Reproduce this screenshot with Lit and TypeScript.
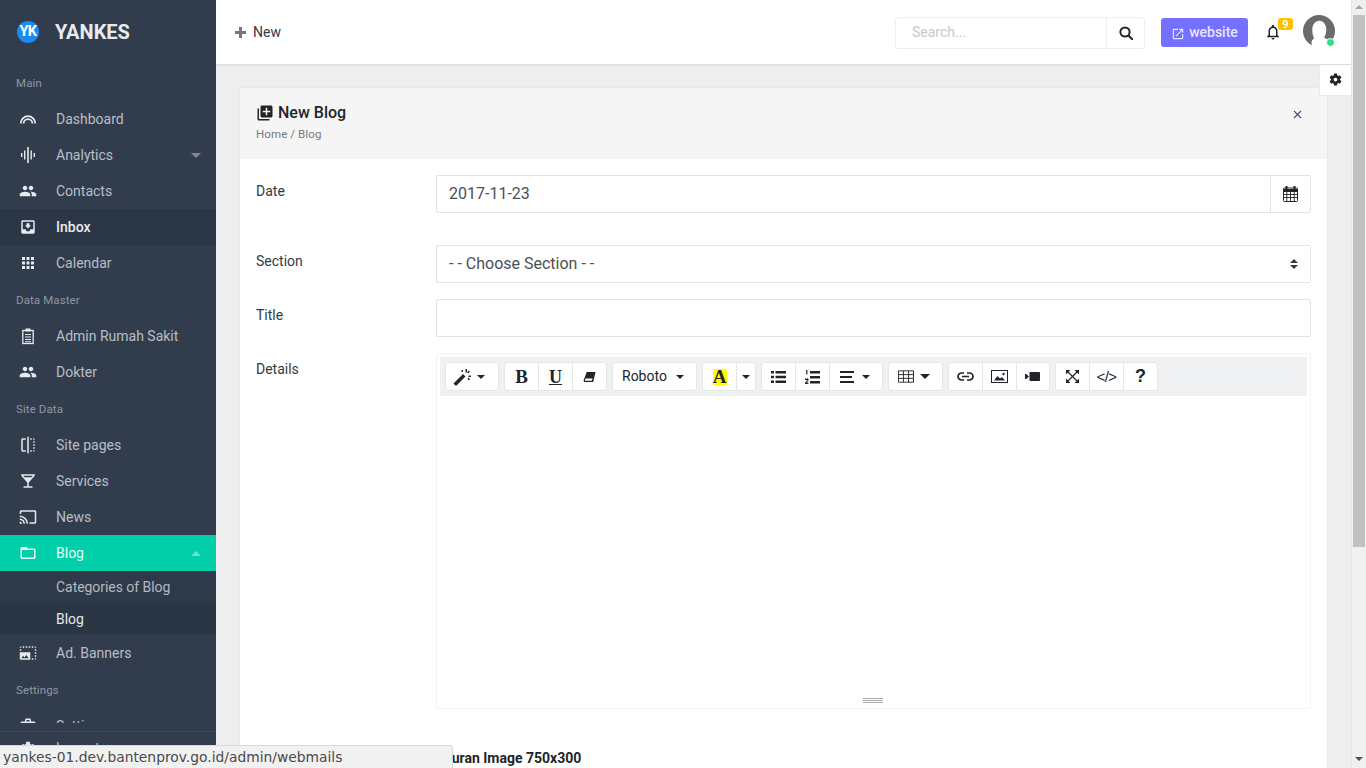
import { LitElement, html, css } from "lit";
import { customElement } from "lit/decorators.js";

const P: Record<string, string> = {
  people: "M16 11c1.66 0 2.99-1.34 2.99-3S17.66 5 16 5c-1.66 0-3 1.34-3 3s1.34 3 3 3zm-8 0c1.66 0 2.99-1.34 2.99-3S9.66 5 8 5C6.34 5 5 6.34 5 8s1.34 3 3 3zm0 2c-2.33 0-7 1.17-7 3.5V19h14v-2.5c0-2.33-4.67-3.5-7-3.5zm8 0c-.29 0-.62.02-.97.05 1.16.84 1.97 1.97 1.97 3.45V19h6v-2.5c0-2.33-4.67-3.5-7-3.5z",
  inbox: "M19 3H4.99c-1.11 0-1.98.89-1.98 2L3 19c0 1.1.88 2 1.99 2H19c1.1 0 2-.9 2-2V5c0-1.11-.9-2-2-2zm0 12h-4c0 1.66-1.35 3-3 3s-3-1.34-3-3H4.99V5H19v10zm-3-5h-2V7h-4v3H8l4 4 4-4z",
  apps: "M4 8h4V4H4v4zm6 12h4v-4h-4v4zm-6 0h4v-4H4v4zm0-6h4v-4H4v4zm6 0h4v-4h-4v4zm6-10v4h4V4h-4zm-6 4h4V4h-4v4zm6 6h4v-4h-4v4zm0 6h4v-4h-4v4z",
  flip: "M15 21h2v-2h-2v2zm4-12h2V7h-2v2zM3 5v14c0 1.1.9 2 2 2h4v-2H5V5h4V3H5c-1.1 0-2 .9-2 2zm16-2v2h2c0-1.1-.9-2-2-2zm-8 20h2V1h-2v22zm8-6h2v-2h-2v2zM15 5h2V3h-2v2zm4 8h2v-2h-2v2zm0 8c1.1 0 2-.9 2-2h-2v2z",
  bar: "M21 5V3H3v2l8 9v5H6v2h12v-2h-5v-5l8-9zM7.43 7L5.66 5h12.69l-1.78 2H7.43z",
  cast: "M21 3H3c-1.1 0-2 .9-2 2v3h2V5h18v14h-7v2h7c1.1 0 2-.9 2-2V5c0-1.1-.9-2-2-2zM1 18v3h3c0-1.66-1.34-3-3-3zm0-4v2c2.76 0 5 2.24 5 5h2c0-3.87-3.13-7-7-7zm0-4v2c4.97 0 9 4.03 9 9h2c0-6.08-4.93-11-11-11z",
  folder: "M20 6h-8l-2-2H4c-1.1 0-1.99.9-1.99 2L2 18c0 1.1.9 2 2 2h16c1.1 0 2-.9 2-2V8c0-1.1-.9-2-2-2zm0 12H4V8h16v10z",
  banner: "M21 15h2v2h-2v-2zm0-4h2v2h-2v-2zm2 8h-2v2c1 0 2-1 2-2zM13 3h2v2h-2V3zm8 4h2v2h-2V7zm0-4v2h2c0-1-1-2-2-2zM1 7h2v2H1V7zm16-4h2v2h-2V3zm0 16h2v2h-2v-2zM3 3C2 3 1 4 1 5h2V3zm6 0h2v2H9V3zM5 3h2v2H5V3zm-4 8v8c0 1.1.9 2 2 2h12V11H1zm2 8l2.5-3.21 1.79 2.15 2.5-3.22L13 19H3z",
  work: "M20 6h-4V4c0-1.11-.89-2-2-2h-4c-1.11 0-2 .89-2 2v2H4c-1.11 0-1.99.89-1.99 2L2 19c0 1.11.89 2 2 2h16c1.11 0 2-.89 2-2V8c0-1.11-.89-2-2-2zm-6 0h-4V4h4v2z",
  gear: "M19.14 12.94c.04-.3.06-.61.06-.94 0-.32-.02-.64-.07-.94l2.03-1.58c.18-.14.23-.41.12-.61l-1.92-3.32c-.12-.22-.37-.29-.59-.22l-2.39.96c-.5-.38-1.03-.7-1.62-.94l-.36-2.54c-.04-.24-.24-.41-.48-.41h-3.84c-.24 0-.43.17-.47.41l-.36 2.54c-.59.24-1.13.57-1.62.94l-2.39-.96c-.22-.08-.47 0-.59.22L2.74 8.87c-.12.21-.08.47.12.61l2.03 1.58c-.05.3-.09.63-.09.94s.02.64.07.94l-2.03 1.58c-.18.14-.23.41-.12.61l1.92 3.32c.12.22.37.29.59.22l2.39-.96c.5.38 1.03.7 1.62.94l.36 2.54c.05.24.24.41.48.41h3.84c.24 0 .44-.17.47-.41l.36-2.54c.59-.24 1.13-.56 1.62-.94l2.39.96c.22.08.47 0 .59-.22l1.92-3.32c.12-.22.07-.47-.12-.61l-2.01-1.58zM12 15c-1.65 0-3-1.35-3-3s1.35-3 3-3 3 1.35 3 3-1.35 3-3 3z",
  bell: "M12 22c1.1 0 2-.9 2-2h-4c0 1.1.9 2 2 2zm6-6v-5c0-3.07-1.63-5.64-4.5-6.32V4c0-.83-.67-1.5-1.5-1.5s-1.5.67-1.5 1.5v.68C7.64 5.36 6 7.92 6 11v5l-2 2v1h16v-1l-2-2zm-2 1H8v-6c0-2.48 1.51-4.5 4-4.5s4 2.02 4 4.5v6z",
  open: "M19 19H5V5h7V3H5c-1.11 0-2 .9-2 2v14c0 1.1.89 2 2 2h14c1.1 0 2-.9 2-2v-7h-2v7zM14 3v2h3.59l-9.83 9.83 1.41 1.41L19 6.41V10h2V3h-7z",
  lib: "M4 6H2v14c0 1.1.9 2 2 2h14v-2H4V6zm16-4H8c-1.1 0-2 .9-2 2v12c0 1.1.9 2 2 2h12c1.1 0 2-.9 2-2V4c0-1.1-.9-2-2-2zm-1 9h-4v4h-2v-4H9V9h4V5h2v4h4v2z",
};

const ic = (n: string, s = 18) => html`<svg width=${s} height=${s} viewBox="0 0 24 24" fill="currentColor"><path d=${P[n]}></path></svg>`;

const arcs = html`<svg width="18" height="18" viewBox="0 0 18 18" fill="none" stroke="currentColor" stroke-width="1.7"><path d="M1.700 13.500a7.300 7.300 0 0 1 14.600 0"></path><path d="M4.600 13.500a4.400 4.400 0 0 1 8.800 0"></path></svg>`;
const wave = html`<svg width="18" height="18" viewBox="0 0 18 18" fill="currentColor"><rect x="2" y="7" width="1.400" height="4"></rect><rect x="5" y="4.500" width="1.400" height="9"></rect><rect x="8.200" y="1" width="1.600" height="16"></rect><rect x="11.500" y="4.500" width="1.400" height="9"></rect><rect x="14.600" y="7" width="1.400" height="4"></rect></svg>`;
const clip = html`<svg width="18" height="18" viewBox="0 0 18 18" fill="none" stroke="currentColor"><rect x="3.800" y="3.500" width="10.400" height="13" stroke-width="1.300"></rect><rect x="6.500" y="1.500" width="5" height="3" fill="currentColor" stroke="none"></rect><path d="M6 7.500h6M6 10h6M6 12.500h6M6 14.800h6" stroke-width="1.100"></path></svg>`;

const nav1 = [
  { i: arcs, t: "Dashboard" },
  { i: wave, t: "Analytics", caret: true },
  { i: ic("people"), t: "Contacts" },
  { i: ic("inbox"), t: "Inbox", cur: true },
  { i: ic("apps"), t: "Calendar" },
];

@customElement("app-root")
export class AppRoot extends LitElement {
  static styles = css`
    :host { display: block; width: 1366px; height: 768px; overflow: hidden; position: relative; font-family: Roboto, sans-serif; color: #212529; background: #eee; }
    * { box-sizing: border-box; }
    .page { display: flex; width: 1366px; height: 768px; }
    .side { width: 216px; flex: none; background: #313d4d; display: flex; flex-direction: column; height: 768px; position: relative; }
    .brand { height: 65px; display: flex; align-items: center; padding-left: 17px; flex: none; padding-bottom: 2px; }
    .logo { width: 22px; height: 22px; border-radius: 50%; background: #1a8cf0; color: #fff; font-size: 14.5px; font-weight: 700; display: flex; align-items: center; justify-content: center; letter-spacing: -0.5px; }
    .bname { margin-left: 16px; font-size: 20px; font-weight: 700; color: #e8ebee; line-height: 1; }
    .scroll { height: 658px; overflow: hidden; flex: none; }
    .lbl { height: 37px; padding: 0 16px; font-size: 11.5px; color: #8e97a2; display: flex; align-items: center; letter-spacing: .1px; }
    .lbl.first { height: 36px; }
    .item { height: 36px; display: flex; align-items: center; font-size: 14px; font-weight: 400; color: #b9bec6; padding-left: 19px; position: relative; }
    .item .ii { width: 18px; height: 18px; display: flex; color: #e6e8eb; margin-right: 19px; flex: none; }
    .item.cur { background: #2b3746; color: #e9ebee; font-weight: 500; }
    .item.act { background: #00cfa9; color: #e6fbf6; }
    .item.act .ii { color: #eafcf8; }
    .caret { position: absolute; left: 191px; top: 16px; width: 0; height: 0; border-left: 5px solid transparent; border-right: 5px solid transparent; border-top: 5px solid #7f8894; }
    .caret.up { border-top: 0; border-bottom: 5px solid #66e2cb; }
    .subs { background: #2e3a4a; }
    .sub { height: 32px; display: flex; align-items: center; padding-left: 56px; font-size: 14px; color: #b3b9c1; letter-spacing: -0.05px; }
    .sub.cur { background: #2a3644; color: #e3e6e9; }
    .sfoot { flex: none; height: 45px; border-top: 1px solid #3e4a5a; margin-top: 8px; display: flex; align-items: flex-start; padding: 8px 0 0 19px; color: #b3b9c1; font-size: 14px; }
    .sfoot .ii { width: 18px; height: 18px; margin-right: 19px; color: #e6e8eb; }

    .main { width: 1135px; flex: none; display: flex; flex-direction: column; height: 768px; }
    .top { height: 65px; flex: none; background: #fff; border-bottom: 1px solid #dcdcdc; display: flex; align-items: center; padding: 0 16px 0 19px; box-shadow: 0 1px 1px rgba(0,0,0,.04); }
    .new { display: flex; align-items: center; font-size: 14px; color: #343a40; gap: 7px; }
    .new svg { color: #777; }
    .spacer { flex: 1; }
    .search { width: 250px; height: 32px; border: 1px solid #eceeef; border-radius: 3px; display: flex; margin-top: 2px; }
    .search .in { flex: 1; padding: 0 0 2px 16px; font-size: 14px; color: #c8c8c8; display: flex; align-items: center; }
    .search .bt { width: 38px; border-left: 1px solid #eceeef; display: flex; align-items: center; justify-content: center; color: #212529; }
    .web { margin-left: 16px; margin-top: 1px; width: 87px; height: 29px; background: #7570ff; border-radius: 3px; color: #e6e5ff; display: flex; align-items: center; justify-content: center; gap: 4px; font-size: 14px; font-weight: 500; padding-bottom: 1px; }
    .web svg { margin-top: 3px; }
    .bell { margin-left: 16px; width: 18px; height: 18px; position: relative; color: #212529; display: flex; }
    .badge { position: absolute; left: 14px; top: -5px; width: 15px; height: 12px; background: #ffc107; border-radius: 3px; color: #fff; font-size: 11px; font-weight: 500; display: flex; align-items: center; justify-content: center; }
    .ava { margin-left: 21px; margin-bottom: 2px; width: 32px; height: 32px; position: relative; }
    .dot { position: absolute; left: 23px; top: 23px; width: 9px; height: 9px; border-radius: 50%; background: #37d98b; border: 1.5px solid #fff; }

    .content { flex: 1; min-height: 0; overflow: hidden; padding: 22px 23px 0 23px; }
    .card { width: 1089px; background: #fff; border: 1px solid #e9e9e9; border-bottom: 0; height: 700px; }
    .chead { height: 71px; background: #f5f5f5; padding: 13px 16px 0; position: relative; display: flex; justify-content: space-between; }
    .ctitle { display: flex; align-items: center; gap: 4px; font-size: 16px; font-weight: 500; color: #212529; line-height: 24px; }
    .crumb { font-size: 11.5px; color: #7a7a7a; margin-top: 1px; line-height: 16px; letter-spacing: .1px; }
    .x { margin: 9px 9px 0 0; color: #3a5078; display: flex; }
    .cbody { padding: 16px 16px 0; }
    .row { display: flex; margin-bottom: 16px; }
    .row.last { margin-bottom: 0; }
    .row label { width: 180px; flex: none; font-size: 14px; color: #333b42; padding-top: 8px; line-height: 16px; }
    .ctl { width: 875px; height: 38px; border: 1px solid #dfe3e6; border-radius: 2px; font-size: 16px; color: #495057; display: flex; align-items: center; padding: 0 0 2px 12px; position: relative; }
    .ctl .addon { position: absolute; right: 0; top: 0; bottom: 0; width: 40px; border-left: 1px solid #dfe3e6; display: flex; align-items: center; justify-content: center; color: #212529; }
    .updown { position: absolute; right: 12px; top: 13px; display: flex; flex-direction: column; gap: 2px; }
    .updown i { display: block; width: 0; height: 0; border-left: 4px solid transparent; border-right: 4px solid transparent; }
    .updown i:first-child { border-bottom: 4.5px solid #343a40; }
    .updown i:last-child { border-top: 4.5px solid #343a40; }
    .r1 { margin-bottom: 32px; }
    .editor { width: 875px; height: 356px; border: 1px solid #f3f3f3; border-radius: 2px; position: relative; padding: 3px 3px 0 3px; }
    .tb { height: 39px; background: #f0f1f2; display: flex; align-items: flex-start; padding: 5px 0 0 5px; gap: 5px; width: 867px; }
    .grp { display: flex; height: 29px; background: #fff; border: 1px solid #e4e6e8; border-radius: 3px; }
    .b { height: 27px; display: flex; align-items: center; justify-content: center; color: #212529; border-left: 1px solid #e4e6e8; width: 34px; font-size: 14px; font-weight: 400; flex: none; }
    .b:first-child { border-left: 0; width: 33px; }
    .b.w100 { width: 33.5px; }
    .b.w52, .b.w52:first-child { width: 52px; gap: 6px; padding-right: 6px; }
    .b.w53 { width: 53px; gap: 8px; padding-right: 3px; }
    .b.w53t, .b.w53t:first-child { width: 53px; gap: 6px; padding-right: 4px; }
    .b.w19 { width: 19px; }
    .b.font, .b.font:first-child { width: 83px; justify-content: flex-start; padding: 0 0 2px 9px; gap: 9px; }
    .b.font .dd { margin-top: 2px; }
    .dd { width: 0; height: 0; border-left: 4px solid transparent; border-right: 4px solid transparent; border-top: 4px solid #212529; flex: none; }
    .dd.lg { border-left-width: 5px; border-right-width: 5px; border-top-width: 5px; }
    .serif { font-family: "Liberation Serif", serif; font-weight: 700; font-size: 19px; line-height: 1; }
    .u { text-decoration: underline; font-size: 18px; }
    .hl { background: #ff0; width: 14px; height: 16px; display: flex; align-items: center; justify-content: center; }
    .hl .serif { font-size: 19px; line-height: 16px; }
    .help { font-family: "Liberation Sans", sans-serif; font-weight: 700; font-size: 18px; }
    .code { font-family: "Liberation Sans", sans-serif; font-size: 15px; font-weight: 400; letter-spacing: -0.6px; }
    .handle { position: absolute; left: 426px; bottom: 5px; width: 20px; height: 5px; border-top: 1px solid #a9a9a9; border-bottom: 1px solid #a9a9a9; }
    .handle::after { content: ""; display: block; height: 1px; margin-top: 1px; background: #a9a9a9; }
    .img { margin: 41px 0 0 179px; font-size: 14px; font-weight: 700; color: #212529; line-height: 16px; }

    .sb { width: 15px; flex: none; background: #f0f0f0; border-left: 1px solid #e4e4e4; position: relative; }
    .sb .arrow { position: absolute; left: 3px; top: 5px; width: 0; height: 0; border-left: 4px solid transparent; border-right: 4px solid transparent; border-bottom: 4px solid #a3a3a3; }
    .sb .arrow.dn { top: auto; bottom: 7px; border-bottom: 0; border-top: 4px solid #505050; }
    .sb .thumb { position: absolute; left: 1px; top: 15px; width: 12px; height: 532px; background: #c1c1c1; }

    .gearbox { position: absolute; left: 1319px; top: 65px; width: 32px; height: 31px; background: #fff; border: 1px solid #eaeaea; border-right: 0; border-top: 0; display: flex; align-items: center; justify-content: center; color: #212529; padding-bottom: 1px; }
    .status { position: absolute; left: 0; bottom: 0; width: 453px; height: 23px; background: #f1f1f1; border: 1px solid #d8d8d8; border-left: 0; border-bottom: 0; border-top-right-radius: 3px; font-family: "DejaVu Sans", sans-serif; font-size: 13.84px; color: #4a4a4a; display: flex; align-items: center; padding-left: 3px; white-space: nowrap; }
  `;

  render() {
    return html`
      <div class="page">
        <aside class="side">
          <div class="brand"><div class="logo">YK</div><div class="bname">YANKES</div></div>
          <div class="scroll">
            <div class="lbl first">Main</div>
            ${nav1.map((n) => html`<div class="item ${n.cur ? "cur" : ""}"><span class="ii">${n.i}</span>${n.t}${n.caret ? html`<span class="caret"></span>` : ""}</div>`)}
            <div class="lbl">Data Master</div>
            <div class="item"><span class="ii">${clip}</span>Admin Rumah Sakit</div>
            <div class="item"><span class="ii">${ic("people")}</span>Dokter</div>
            <div class="lbl">Site Data</div>
            <div class="item"><span class="ii">${ic("flip")}</span>Site pages</div>
            <div class="item"><span class="ii">${ic("bar")}</span>Services</div>
            <div class="item"><span class="ii">${ic("cast")}</span>News</div>
            <div class="item act"><span class="ii">${ic("folder")}</span>Blog<span class="caret up"></span></div>
            <div class="subs"><div class="sub">Categories of Blog</div><div class="sub cur">Blog</div></div>
            <div class="item"><span class="ii">${ic("banner")}</span>Ad. Banners</div>
            <div class="lbl">Settings</div>
            <div class="item"><span class="ii">${ic("work")}</span>Settings</div>
          </div>
          <div class="sfoot"><span class="ii">${ic("gear")}</span>Logout</div>
        </aside>

        <div class="main">
          <header class="top">
            <div class="new"><svg width="11" height="11" viewBox="0 0 11 11" fill="currentColor"><path d="M4 0h3v4h4v3H7v4H4V7H0V4h4z"></path></svg>New</div>
            <div class="spacer"></div>
            <div class="search">
              <div class="in">Search...</div>
              <div class="bt"><svg width="14" height="14" viewBox="0 0 14 14" fill="none" stroke="currentColor" stroke-width="2"><circle cx="6" cy="6" r="4.600"></circle><path d="M9.500 9.500l3.700 3.700" stroke-linecap="round"></path></svg></div>
            </div>
            <div class="web">${ic("open", 14)}website</div>
            <div class="bell">${ic("bell")}<span class="badge">9</span></div>
            <div class="ava">
              <svg width="32" height="32" viewBox="0 0 32 32"><circle cx="16" cy="16" r="16" fill="#6b6b6b"></circle><path d="M16.300 5.800c4 0 7 4 7 8.700 0 3.200-.8 6-2.200 8 .5.700 2 1 3.400 1.500 2 .8 4 2.500 4 2.500V33H10c-.3-1.500-1.500-3.500-1.500-5.500 0-1.500 1-3 2.600-4.200-1.200-2.300-1.800-5-1.800-8.800 0-4.700 3-8.700 7-8.700z" fill="#fff"></path></svg>
              <span class="dot"></span>
            </div>
          </header>
          <div class="content">
            <section class="card">
              <div class="chead">
                <div>
                  <div class="ctitle">${ic("lib", 18)}New Blog</div>
                  <div class="crumb">Home / Blog</div>
                </div>
                <div class="x"><svg width="9" height="9" viewBox="0 0 9 9" stroke="currentColor" stroke-width="1.100" fill="none"><path d="M1 1l7 7M8 1L1 8"></path></svg></div>
              </div>
              <div class="cbody">
                <div class="row r1"><label>Date</label><div class="ctl">2017-11-23<span class="addon"><svg width="15" height="16" viewBox="0 0 15 16" fill="none" stroke="currentColor"><rect x=".5" y="2" width="14" height="13.500" rx="1"></rect><path d="M.5 4.500h14" stroke-width="3"></path><path d="M3.500 0v3.500M11.500 0v3.500" stroke-width="2"></path><path d="M3.800 6v9M7.500 6v9M11.200 6v9M1 8.500h13M1 11.500h13" stroke-width=".9"></path></svg></span></div></div>
                <div class="row"><label>Section</label><div class="ctl">- - Choose Section - -<span class="updown"><i></i><i></i></span></div></div>
                <div class="row"><label>Title</label><div class="ctl"></div></div>
                <div class="row last"><label>Details</label>
                  <div class="editor">
                    <div class="tb">
                      <div class="grp"><div class="b w52"><svg width="18" height="18" viewBox="0 0 18 18" fill="currentColor"><path d="M.5 15.500L10 6l2.500 2.500L3 18z"></path><path d="M12.500 1h1.500v3.500h-1.500zM15.500 7.500H18V9h-2.500zM8.500 2h1.500v2H8.500zM16 2.500l1 1-2 2-1-1zM14.500 10.500l1-1 1.500 2-1 1z"></path></svg><span class="dd"></span></div></div>
                      <div class="grp"><div class="b"><span class="serif">B</span></div><div class="b"><span class="serif u">U</span></div><div class="b"><svg width="13" height="12" viewBox="0 0 14 12" fill="currentColor"><path d="M4 .5h9.500L11 11.500H1.500L.5 10z"></path><path d="M2.600 7.500h7.600L9.600 10H2z" fill="#fff"></path></svg></div></div>
                      <div class="grp"><div class="b font">Roboto<span class="dd"></span></div></div>
                      <div class="grp"><div class="b"><span class="hl"><span class="serif">A</span></span></div><div class="b w19"><span class="dd"></span></div></div>
                      <div class="grp">
                        <div class="b"><svg width="15" height="12" viewBox="0 0 15 12" fill="currentColor"><path d="M0 0h3v2.500H0zM0 4.700h3v2.500H0zM0 9.500h3V12H0zM4.500 0H15v2.500H4.500zM4.500 4.700H15v2.500H4.500zM4.500 9.500H15V12H4.500z"></path></svg></div>
                        <div class="b"><svg width="15" height="14" viewBox="0 0 15 14" fill="currentColor"><path d="M1.200 0h1.200v4.500H1.200zM0 8.500h3.400v2.300L1.400 12.500h2V14H0v-1.500l2-1.800v-.7H0zM5 1h10v2.500H5zM5 6h10v2.500H5zM5 11h10v2.500H5z"></path></svg></div>
                        <div class="b w53"><svg width="14" height="12" viewBox="0 0 14 12" fill="currentColor"><path d="M0 0h14v2H0zM0 5h12v2H0zM0 10h14v2H0z"></path></svg><span class="dd"></span></div>
                      </div>
                      <div class="grp"><div class="b w53t"><svg width="16" height="13" viewBox="0 0 17 13" fill="none" stroke="currentColor"><path d="M.5.500h16v12H.5zM.5 4.500h16M.5 8.500h16M5.800.500v12M11.200.500v12"></path></svg><span class="dd lg"></span></div></div>
                      <div class="grp">
                        <div class="b"><svg width="17" height="9" viewBox="0 0 17 9" fill="none" stroke="currentColor" stroke-width="1.700"><path d="M7 1H4.500a3.500 3.500 0 0 0 0 7H7M10 1h2.500a3.500 3.500 0 0 1 0 7H10M5 4.500h7"></path></svg></div>
                        <div class="b w100"><svg width="17" height="13" viewBox="0 0 17 13"><rect x=".5" y=".5" width="16" height="12" fill="none" stroke="currentColor"></rect><path d="M3 10.500l3.500-4.500 2.500 2.500 2-1.500 3 3.500z" fill="currentColor"></path><circle cx="12.500" cy="4" r="1.200" fill="currentColor"></circle></svg></div>
                        <div class="b w100"><svg width="15" height="9" viewBox="0 0 15 9" fill="currentColor"><rect x="4.500" y="0" width="10.500" height="9" rx=".8"></rect><path d="M0 2h1.200l2.800 2.500L1.200 7H0z"></path></svg></div>
                      </div>
                      <div class="grp">
                        <div class="b"><svg width="13" height="13" viewBox="0 0 13 13"><path d="M2 2l9 9M11 2l-9 9" stroke="currentColor" stroke-width="1.200"></path><path d="M0 0h4.500L0 4.500zM13 0v4.500L8.500 0zM0 13V8.500L4.500 13zM13 13H8.500L13 8.500z" fill="currentColor"></path></svg></div>
                        <div class="b code">&lt;/&gt;</div>
                        <div class="b help">?</div>
                      </div>
                    </div>
                    <div class="handle"></div>
                  </div>
                </div>
                <div class="img">Ukuran Image 750x300</div>
              </div>
            </section>
          </div>
        </div>
        <div class="sb"><div class="arrow"></div><div class="thumb"></div><div class="arrow dn"></div></div>
      </div>
      <div class="gearbox">${ic("gear", 15)}</div>
      <div class="status">yankes-01.dev.bantenprov.go.id/admin/webmails</div>
    `;
  }
}
